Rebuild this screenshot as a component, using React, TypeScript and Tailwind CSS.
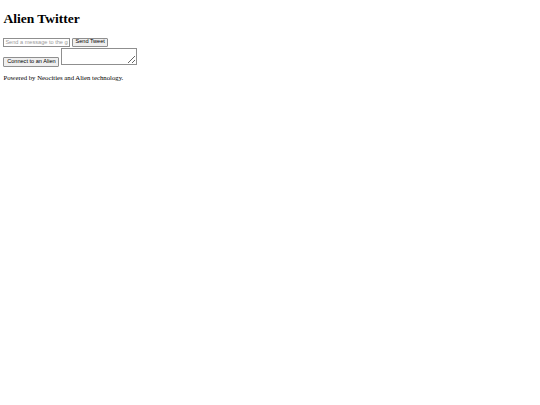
import React from "react";

const App: React.FC = () => {
  return (
    <div className="px-[3.4px] text-[6.75px] text-black bg-white min-h-[405px] font-['Liberation_Serif','Times_New_Roman',serif]">
      <h1 className="text-[13.5px] font-bold leading-[15.5px] mt-[10.5px] mb-[9px]">
        Alien Twitter
      </h1>
      <form
        className="flex flex-col font-['Liberation_Sans',Arial,sans-serif] text-[5.6px]"
        onSubmit={(e) => e.preventDefault()}
      >
        <div className="flex items-center gap-[1.8px] mt-[2.5px]">
          <input
            type="text"
            placeholder="Send a message to the galaxy"
            className="w-[67px] h-[9px] px-[1px] border border-[#8f8f8f] text-[5.6px] placeholder:text-[#9a9a9a] outline-none"
          />
          <button
            type="submit"
            className="w-[36px] h-[9.5px] bg-[#efefef] border border-[#8f8f8f] rounded-[1px] text-[5.6px] leading-none"
          >
            Send Tweet
          </button>
        </div>
        <div className="flex items-start gap-[1.8px] mt-[0.5px]">
          <button
            type="button"
            className="mt-[9.5px] w-[56px] h-[10px] bg-[#efefef] border border-[#8f8f8f] rounded-[1px] text-[5.6px] leading-none"
          >
            Connect to an Alien
          </button>
          <textarea className="w-[76px] h-[17px] border border-[#8f8f8f] text-[5.6px] outline-none" />
        </div>
      </form>
      <p className="mt-[7px] mb-[6.75px] leading-[7.8px]">
        Powered by Neocities and Alien technology.
      </p>
    </div>
  );
};

export default App;
